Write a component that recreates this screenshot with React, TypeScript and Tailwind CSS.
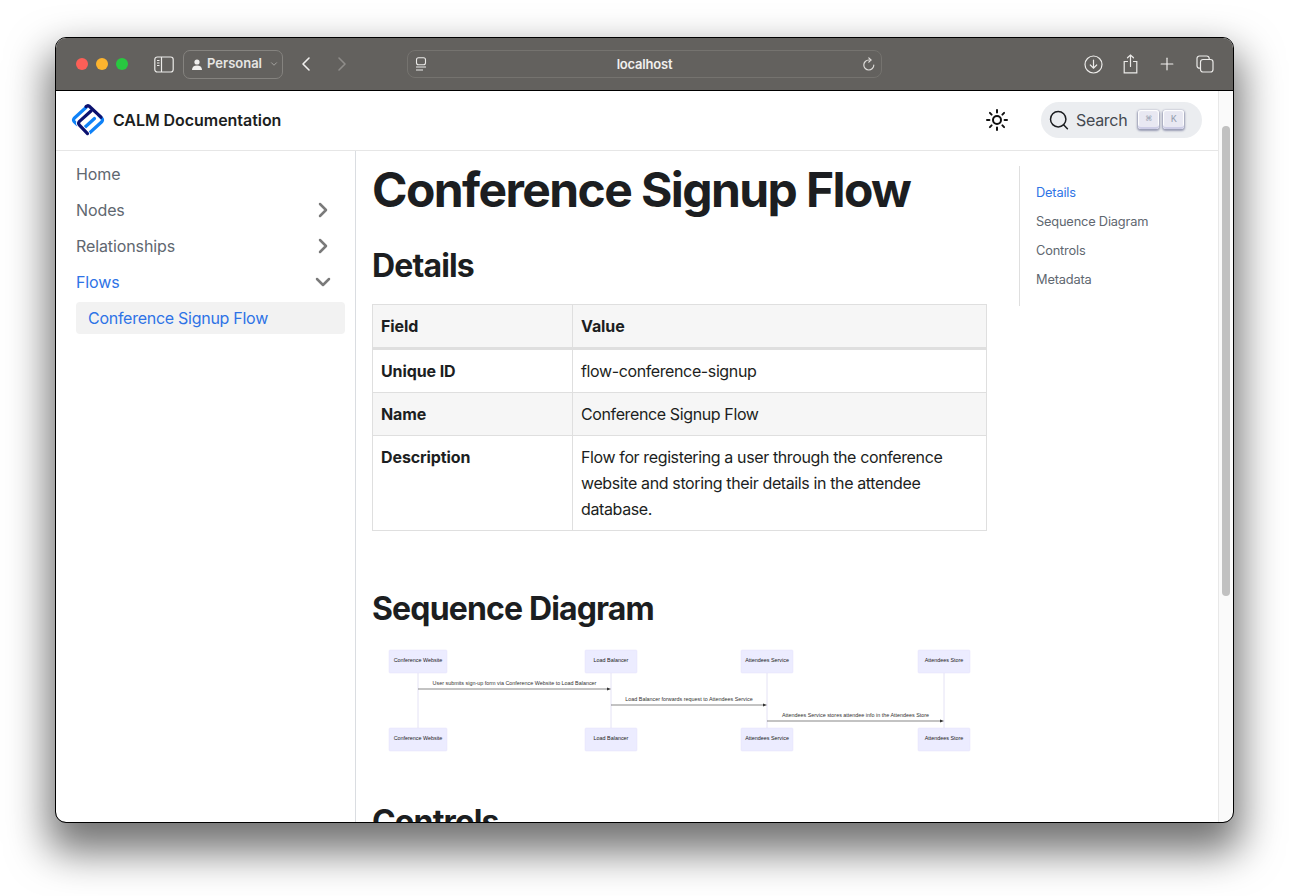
import { ChevronRight, ChevronDown, ChevronLeft, Plus } from 'lucide-react';

const actors = [
  { name: 'Conference Website', x: 9, w: 58, cx: 38 },
  { name: 'Load Balancer', x: 205, w: 52, cx: 231 },
  { name: 'Attendees Service', x: 361, w: 52, cx: 387 },
  { name: 'Attendees Store', x: 538, w: 52, cx: 564 },
];

const messages = [
  { text: 'User submits sign-up form via Conference Website to Load Balancer', from: 38, to: 231, y: 49 },
  { text: 'Load Balancer forwards request to Attendees Service', from: 231, to: 387, y: 65 },
  { text: 'Attendees Service stores attendee info in the Attendees Store', from: 387, to: 564, y: 81 },
];

function SequenceDiagram() {
  return (
    <svg width="600" height="120" viewBox="0 0 600 120" className="block" fontFamily="'Liberation Sans', sans-serif">
      {actors.map((a) => (
        <g key={a.name}>
          <line x1={a.cx} y1="33" x2={a.cx} y2="88" stroke="#e4e2f5" strokeWidth="1" />
          <rect x={a.x} y="10" width={a.w} height="23" rx="1" fill="#ececff" stroke="#e6e3fb" strokeWidth="0.5" />
          <rect x={a.x} y="88" width={a.w} height="23" rx="1" fill="#ececff" stroke="#e6e3fb" strokeWidth="0.5" />
          <text x={a.cx} y="20.5" fontSize="5.4" fill="#222" textAnchor="middle" dominantBaseline="middle">{a.name}</text>
          <text x={a.cx} y="98.5" fontSize="5.4" fill="#222" textAnchor="middle" dominantBaseline="middle">{a.name}</text>
        </g>
      ))}
      {messages.map((m) => (
        <g key={m.text}>
          <text x={(m.from + m.to) / 2} y={m.y - 5.5} fontSize="5.4" fill="#333" textAnchor="middle" dominantBaseline="middle">{m.text}</text>
          <line x1={m.from} y1={m.y} x2={m.to - 3} y2={m.y} stroke="#555" strokeWidth="0.7" />
          <path d={`M${m.to} ${m.y}l-4 -1.6v3.2z`} fill="#333" />
        </g>
      ))}
    </svg>
  );
}

function Logo() {
  return (
    <svg width="34" height="34" viewBox="0 0 34 34" fill="none" strokeLinecap="round" strokeLinejoin="round" strokeWidth="3.2">
      <path d="M15 4.5L3.2 15.2Q1.8 17 3.2 18.6L6 21.5" stroke="#0f82f7" />
      <path d="M19 29.5L30.8 18.8Q32.2 17 30.8 15.4L28 12.5" stroke="#0f82f7" />
      <path d="M12 26L23.5 15.5" stroke="#0f82f7" />
      <path d="M20 8L8.2 18.6Q7 20.2 8.2 21.8L16.5 30.6" stroke="#fff" strokeWidth="5" />
      <path d="M15 3.6L16.2 2.8Q17 2.2 18 3L30 14.2" stroke="#0b1170" />
      <path d="M20 8L8.2 18.6Q7 20.2 8.2 21.8L16.5 30.6" stroke="#0b1170" />
    </svg>
  );
}

function SunIcon() {
  return (
    <svg width="24" height="24" viewBox="0 0 24 24" fill="none" stroke="#111" strokeLinecap="round">
      <circle cx="12" cy="12" r="4" strokeWidth="2" />
      <path d="M12 2v2.4M12 19.6V22M2 12h2.4M19.6 12H22M4.9 4.9l1.7 1.7M17.4 17.4l1.7 1.7M4.9 19.1l1.7-1.7M17.4 6.6l1.7-1.7" strokeWidth="2" />
    </svg>
  );
}

function TitleBar() {
  return (
    <div className="h-[53px] shrink-0 bg-[#63615e] border-b border-black flex items-center text-[#f1f0ee] relative">
      <div className="flex items-center gap-[8px] ml-[20px]">
        <span className="w-3 h-3 rounded-full bg-[#fc5f57]" />
        <span className="w-3 h-3 rounded-full bg-[#fdb42e]" />
        <span className="w-3 h-3 rounded-full bg-[#28c840]" />
      </div>
      <svg className="ml-[26px]" width="20" height="17" viewBox="0 0 20 17" fill="none" stroke="#ecebe9" strokeWidth="1.2">
        <rect x="0.8" y="1" width="18.4" height="15" rx="2.5" />
        <path d="M7.5 1v15" />
        <path d="M3 4.5h2.5M3 7h2.5M3 9.5h2.5" strokeWidth="1" />
      </svg>
      <div className="ml-[9px] h-[29px] w-[100px] rounded-[7px] border border-[#85837f] flex items-center pl-[8px] text-[13px] font-semibold">
        <svg width="10" height="11" viewBox="0 0 10 11" fill="#f1f0ee">
          <circle cx="5" cy="3" r="2.6" />
          <path d="M0 11c0-3.2 2-4.6 5-4.6s5 1.4 5 4.6z" />
        </svg>
        <span className="ml-[5px] text-[#e6e5e3]">Personal</span>
        <ChevronDown className="ml-[7px] text-[#b0aeab]" size={10} strokeWidth={2} />
      </div>
      <ChevronLeft className="ml-[11px] text-[#f1f0ee]" size={24} strokeWidth={1.6} />
      <ChevronRight className="ml-[12px] text-[#8f8d8a]" size={24} strokeWidth={1.6} />
      <div className="ml-[53px] h-[28px] w-[475px] rounded-[8px] border border-[#75736f] flex items-center justify-between pl-[7px] pr-[5px] relative">
        <svg width="12" height="14" viewBox="0 0 12 14" fill="none" stroke="#ecebe9" strokeWidth="1.1">
          <rect x="1.5" y="0.8" width="9" height="7" rx="2" />
          <path d="M1 10h10M1 13h7" />
        </svg>
        <span className="text-[13px] font-semibold text-[#f1f0ee] tracking-[-0.2px] mt-[1px]">localhost</span>
        <svg width="14" height="15" viewBox="0 0 14 15" fill="none" stroke="#dddbd8" strokeWidth="1.2" strokeLinecap="round">
          <path d="M11.8 8a5 5 0 1 1-5-5h2" />
          <path d="M6.8 0.8L9 3 6.8 5.2" />
        </svg>
      </div>
      <svg className="ml-[202px]" width="19" height="19" viewBox="0 0 19 19" fill="none" stroke="#ecebe9" strokeWidth="1.2" strokeLinecap="round">
        <circle cx="9.5" cy="9.5" r="8.5" />
        <path d="M9.5 5v8M6.3 10l3.2 3.2 3.2-3.2" />
      </svg>
      <svg className="ml-[20px]" width="15" height="20" viewBox="0 0 15 20" fill="none" stroke="#ecebe9" strokeWidth="1.2" strokeLinecap="round">
        <path d="M4.5 7.5H1.2v11.3h12.6V7.5h-3.3" />
        <path d="M7.5 12.5V1M4.5 3.8L7.5 1l3 2.8" />
      </svg>
      <Plus className="ml-[19px] text-[#f1f0ee]" size={20} strokeWidth={1.4} />
      <svg className="ml-[19px]" width="18" height="18" viewBox="0 0 18 18" fill="none" stroke="#ecebe9" strokeWidth="1.2">
        <rect x="4.5" y="4.5" width="12.5" height="12.5" rx="2.5" />
        <path d="M4 13.2h-0.5a2.5 2.5 0 0 1-2.5-2.5V3.5A2.5 2.5 0 0 1 3.5 1h7.2a2.5 2.5 0 0 1 2.5 2.5V4" />
      </svg>
    </div>
  );
}

function Navbar() {
  const key = "w-[21px] h-[19px] rounded-[3px] bg-[#e8e8f2] shadow-[inset_0_-2px_0_0_#cdcde6,inset_0_0_1px_1px_#fff,0_1px_2px_1px_rgba(30,35,90,0.4)] flex items-center justify-center text-[10px] text-[#969faf]";
  return (
    <div className="h-[60px] shrink-0 border-b border-[#e6e6e6] flex items-center pl-[15px] pr-[16px] pb-[2px] bg-white">
      <Logo />
      <span className="ml-[8px] text-[16px] font-semibold text-[#1c1e21] tracking-[-0.05px]">CALM Documentation</span>
      <div className="ml-auto mr-[32px]">
        <SunIcon />
      </div>
      <div className="h-[36px] w-[161px] rounded-full bg-[#ebedf0] flex items-center pl-[8px]">
        <svg width="20" height="20" viewBox="0 0 20 20" fill="none" stroke="#1c1e21" strokeWidth="1.5" strokeLinecap="round">
          <circle cx="9.2" cy="9.2" r="7.7" />
          <path d="M14.8 15l3.6 3.8" />
        </svg>
        <span className="ml-[7px] text-[16px] text-[#444950] tracking-[-0.3px]">Search</span>
        <div className="ml-[11px] flex gap-[4px]">
          <kbd className={key}>⌘</kbd>
          <kbd className={key}>K</kbd>
        </div>
      </div>
    </div>
  );
}

function Sidebar() {
  const item = 'h-[32px] flex items-center justify-between pl-[8px] pr-[8px] text-[16px] tracking-[-0.1px]';
  return (
    <div className="w-[300px] shrink-0 border-r border-[#dadde1] px-[12px] pt-[7px] flex flex-col gap-[4px] text-[#606770]">
      <div className={item}>Home</div>
      <div className={item}>
        Nodes
        <ChevronRight className="text-[#7a7a7a]" size={24} strokeWidth={2.5} />
      </div>
      <div className={item}>
        Relationships
        <ChevronRight className="text-[#7a7a7a]" size={24} strokeWidth={2.5} />
      </div>
      <div className={`${item} text-[#2e73e6]`}>
        Flows
        <ChevronDown className="text-[#7a7a7a]" size={24} strokeWidth={2.5} />
      </div>
      <div className="h-[32px] flex items-center rounded-[4px] bg-[#f2f2f2] pl-[12px] text-[16px] tracking-[-0.27px] text-[#2e73e6] mx-[8px] w-[269px]">
        Conference Signup Flow
      </div>
    </div>
  );
}

function DetailsTable() {
  const cell = 'border border-[#dfdfdf] px-[8px] py-[8px] align-top text-left';
  return (
    <table className="w-[615px] table-fixed border-collapse text-[16px] leading-[26px] text-[#1c1e21] tracking-[-0.38px]">
      <thead>
        <tr className="bg-[#f6f6f6] border-b-[3px] border-[#dfdfdf]">
          <th className={`${cell} w-[200px] font-bold tracking-[-0.1px]`}>Field</th>
          <th className={`${cell} font-bold tracking-[-0.1px]`}>Value</th>
        </tr>
      </thead>
      <tbody>
        <tr>
          <td className={`${cell} font-bold tracking-[-0.1px]`}>Unique ID</td>
          <td className={cell}>flow-conference-signup</td>
        </tr>
        <tr className="bg-[#f6f6f6]">
          <td className={`${cell} font-bold tracking-[-0.1px]`}>Name</td>
          <td className={cell}>Conference Signup Flow</td>
        </tr>
        <tr>
          <td className={`${cell} font-bold tracking-[-0.1px]`}>Description</td>
          <td className={cell}>
            Flow for registering a user through the conference website and storing their details in the attendee database.
          </td>
        </tr>
      </tbody>
    </table>
  );
}

function Toc() {
  return (
    <div className="w-[199px] ml-[32px] mt-[15px] shrink-0">
      <div className="border-l border-[#dfdfdf] pl-[16px] pt-[18px] flex flex-col gap-[10.5px] text-[12.8px] leading-[18.5px] tracking-[-0.18px] text-[#606770] h-[140px]">
        <span className="text-[#2e73e6]">Details</span>
        <span>Sequence Diagram</span>
        <span>Controls</span>
        <span>Metadata</span>
      </div>
    </div>
  );
}

export default function App() {
  return (
    <div className="w-[1289px] h-[896px] bg-white pt-[38px] pl-[56px] font-['Inter','Liberation_Sans',sans-serif] overflow-hidden">
      <div className="w-[1177px] h-[784px] rounded-[10px] overflow-hidden flex flex-col bg-white outline outline-1 outline-black shadow-[0_22px_40px_8px_rgba(0,0,0,0.55)]">
        <TitleBar />
        <div className="flex-1 flex min-h-0">
          <div className="flex-1 flex flex-col min-w-0">
            <Navbar />
            <div className="flex-1 flex min-h-0">
              <Sidebar />
              <div className="flex-1 flex overflow-hidden pl-[16px]">
                <div className="w-[615px] shrink-0">
                  <h1 className="text-[48px] leading-[60px] font-bold tracking-[-1.6px] text-[#1c1e21] mt-[9px]">Conference Signup Flow</h1>
                  <h2 className="text-[32px] leading-[40px] font-bold tracking-[-0.85px] text-[#1c1e21] mt-[26px] mb-[18px]">Details</h2>
                  <DetailsTable />
                  <h2 className="text-[32px] leading-[40px] font-bold tracking-[-0.85px] text-[#1c1e21] mt-[58px] mb-[11px]">Sequence Diagram</h2>
                  <div className="ml-[8px]">
                    <SequenceDiagram />
                  </div>
                  <h2 className="text-[32px] leading-[40px] font-bold tracking-[-0.85px] text-[#1c1e21] mt-[42px]">Controls</h2>
                </div>
                <Toc />
              </div>
            </div>
          </div>
          <div className="w-[15px] shrink-0 border-l border-[#e8e8e8] bg-[#fafafa] pt-[35px] pl-[3px]">
            <div className="w-[8px] h-[470px] rounded-full bg-[#c1c1c1]" />
          </div>
        </div>
      </div>
    </div>
  );
}
